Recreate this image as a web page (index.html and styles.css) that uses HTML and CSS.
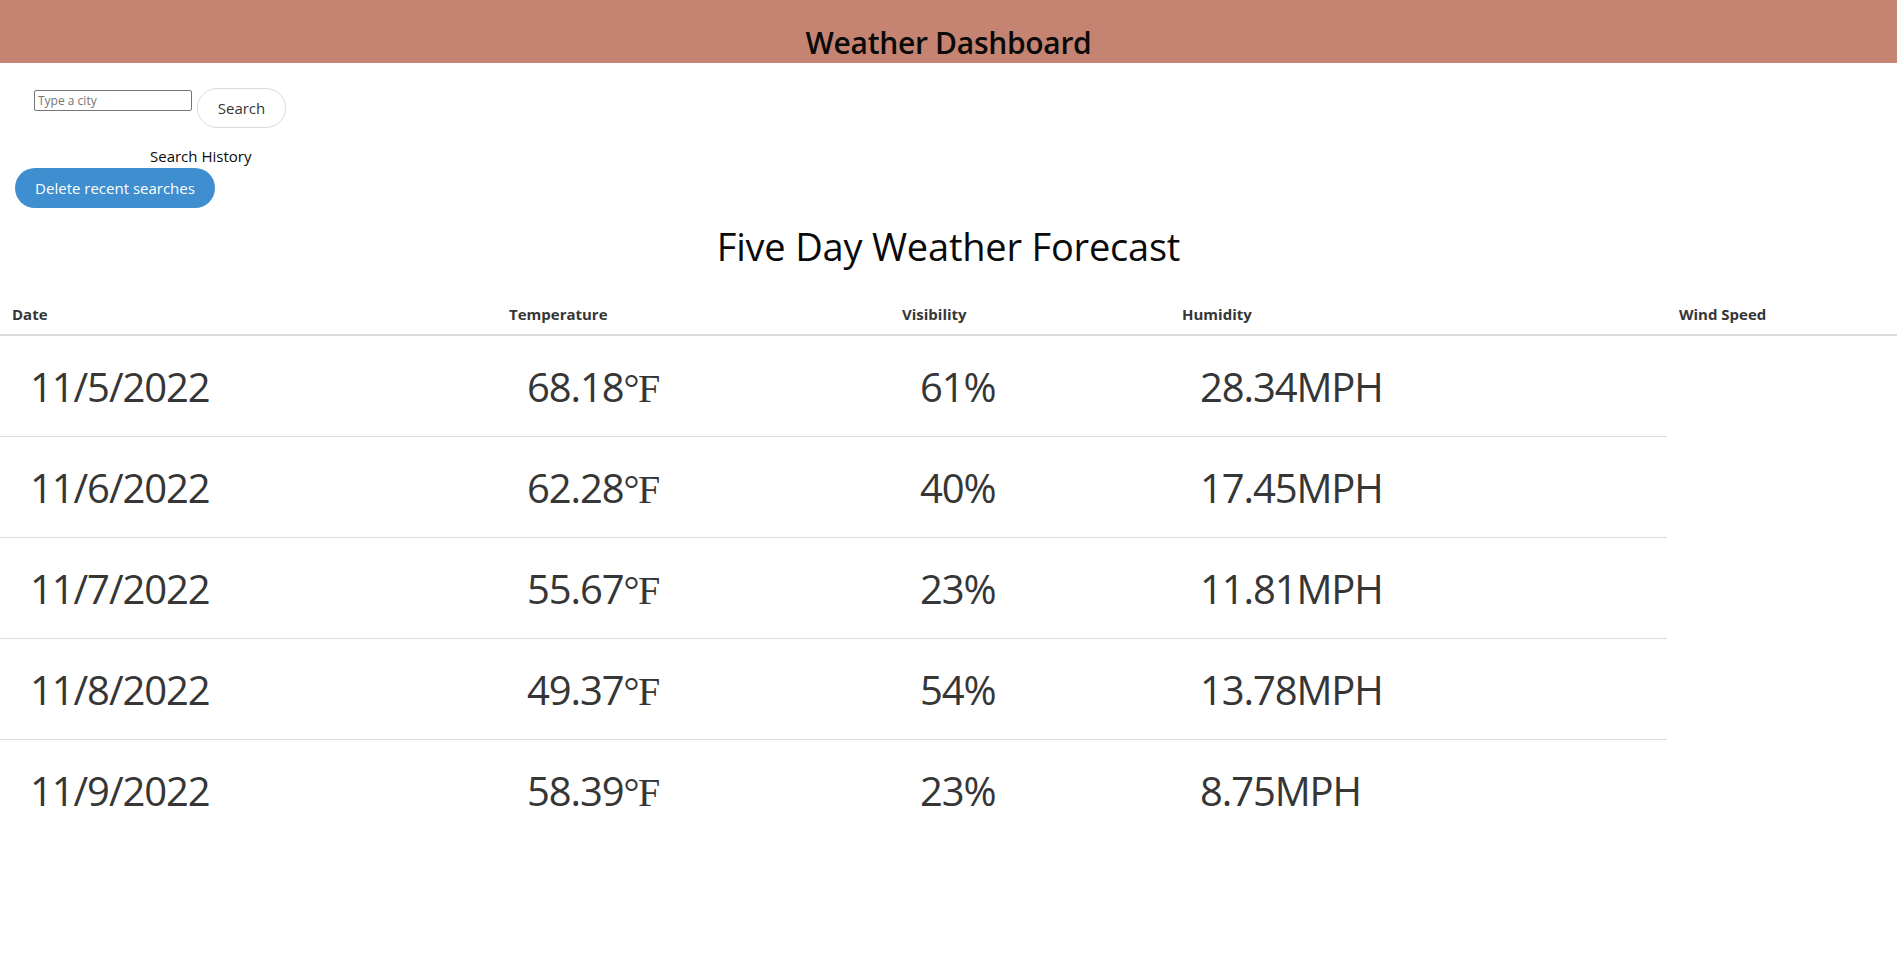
FILE: index.html
```html
<!DOCTYPE html>
<html lang="en">
<head>
<meta charset="utf-8">
<title>Weather Dashboard</title>
<link rel="stylesheet" href="styles.css">
</head>
<body>
<header class="topbar">
  <h1 class="brand">Weather Dashboard</h1>
</header>
<section class="search">
  <div class="search-row">
    <input class="city-input" type="text" placeholder="Type a city">
    <button class="btn btn-search">Search</button>
  </div>
  <p class="history-label">Search History</p>
  <button class="btn btn-delete">Delete recent searches</button>
</section>
<h2 class="forecast-title">Five Day Weather Forecast</h2>
<table class="forecast">
  <colgroup>
    <col class="c-date">
    <col class="c-temp">
    <col class="c-vis">
    <col class="c-hum">
    <col class="c-wind">
  </colgroup>
  <thead>
    <tr><th>Date</th><th>Temperature</th><th>Visibility</th><th>Humidity</th><th>Wind Speed</th></tr>
  </thead>
  <tbody>
    <tr><td>11/5/2022</td><td>68.18<span class="unit">°F</span></td><td>61%</td><td>28.34MPH</td></tr>
    <tr><td>11/6/2022</td><td>62.28<span class="unit">°F</span></td><td>40%</td><td>17.45MPH</td></tr>
    <tr><td>11/7/2022</td><td>55.67<span class="unit">°F</span></td><td>23%</td><td>11.81MPH</td></tr>
    <tr><td>11/8/2022</td><td>49.37<span class="unit">°F</span></td><td>54%</td><td>13.78MPH</td></tr>
    <tr><td>11/9/2022</td><td>58.39<span class="unit">°F</span></td><td>23%</td><td>8.75MPH</td></tr>
  </tbody>
</table>
</body>
</html>
```

FILE: styles.css
```css
html, body {
  margin: 0;
  padding: 0;
}
body {
  font-family: "Open Sans", "Noto Sans", sans-serif;
  font-size: 16px;
  line-height: 1.5;
  color: #4a4a4a;
  background: #fff;
}
.topbar {
  background: #c58472;
  height: 63px;
  box-sizing: border-box;
  padding-top: 25px;
  text-align: center;
}
.brand {
  margin: 0;
  font-size: 30px;
  line-height: 36px;
  font-weight: 600;
  color: #0a0a0a;
  letter-spacing: -0.3px;
}
.search {
  padding: 25px 0 0 0;
}
.search-row {
  display: flex;
  align-items: flex-start;
  padding-left: 34px;
}
.city-input {
  margin-top: 2px;
  width: 158px;
  height: 21px;
  box-sizing: border-box;
  border: 1px solid #767676;
  border-radius: 2px;
  padding: 1px 3px;
  font-family: "Open Sans", sans-serif;
  font-size: 12px;
  color: #333;
}
.city-input::placeholder {
  color: #757575;
}
.btn {
  font-family: "Open Sans", "Noto Sans", sans-serif;
  font-size: 15px;
  height: 40px;
  box-sizing: border-box;
  border-radius: 9999px;
  padding: 0 20px;
  line-height: 38px;
  cursor: pointer;
}
.btn-search {
  margin-left: 5px;
  background: #fff;
  border: 1px solid #dbdbdb;
  color: #363636;
  width: 89px;
  padding: 0;
}
.history-label {
  margin: 16px 0 0 150px;
  line-height: 24px;
  color: #0a0a0a;
  font-size: 15px;
}
.btn-delete {
  margin-left: 15px;
  background: #3e8ed0;
  border: 1px solid transparent;
  color: #fff;
  width: 200px;
  padding: 0;
}
.forecast-title {
  margin: 16px 0 0 0;
  text-align: center;
  font-size: 38px;
  line-height: 45px;
  font-weight: 400;
  color: #0a0a0a;
  letter-spacing: -0.2px;
}
.forecast {
  margin-top: 25px;
  width: 100%;
  border-collapse: collapse;
  table-layout: fixed;
}
.c-date { width: 497px; }
.c-temp { width: 393px; }
.c-vis { width: 280px; }
.c-hum { width: 497px; }
.c-wind { width: 230px; }
.forecast th {
  text-align: left;
  font-size: 15px;
  font-weight: 700;
  color: #363636;
  padding: 8px 12px;
  line-height: 24px;
  border-bottom: 2px solid #dbdbdb;
  letter-spacing: 0;
}
.forecast td {
  font-size: 40px;
  line-height: 60px;
  padding: 21px 30px 19px;
  color: #363636;
  border-bottom: 1px solid #dbdbdb;
  white-space: nowrap;
  font-weight: 400;
  letter-spacing: -1.1px;
}
.forecast tbody tr:last-child td {
  border-bottom: 0;
}
.unit {
  font-family: "Liberation Serif", serif;
  letter-spacing: -1.5px;
  line-height: 1;
  font-weight: 400;
}
```
